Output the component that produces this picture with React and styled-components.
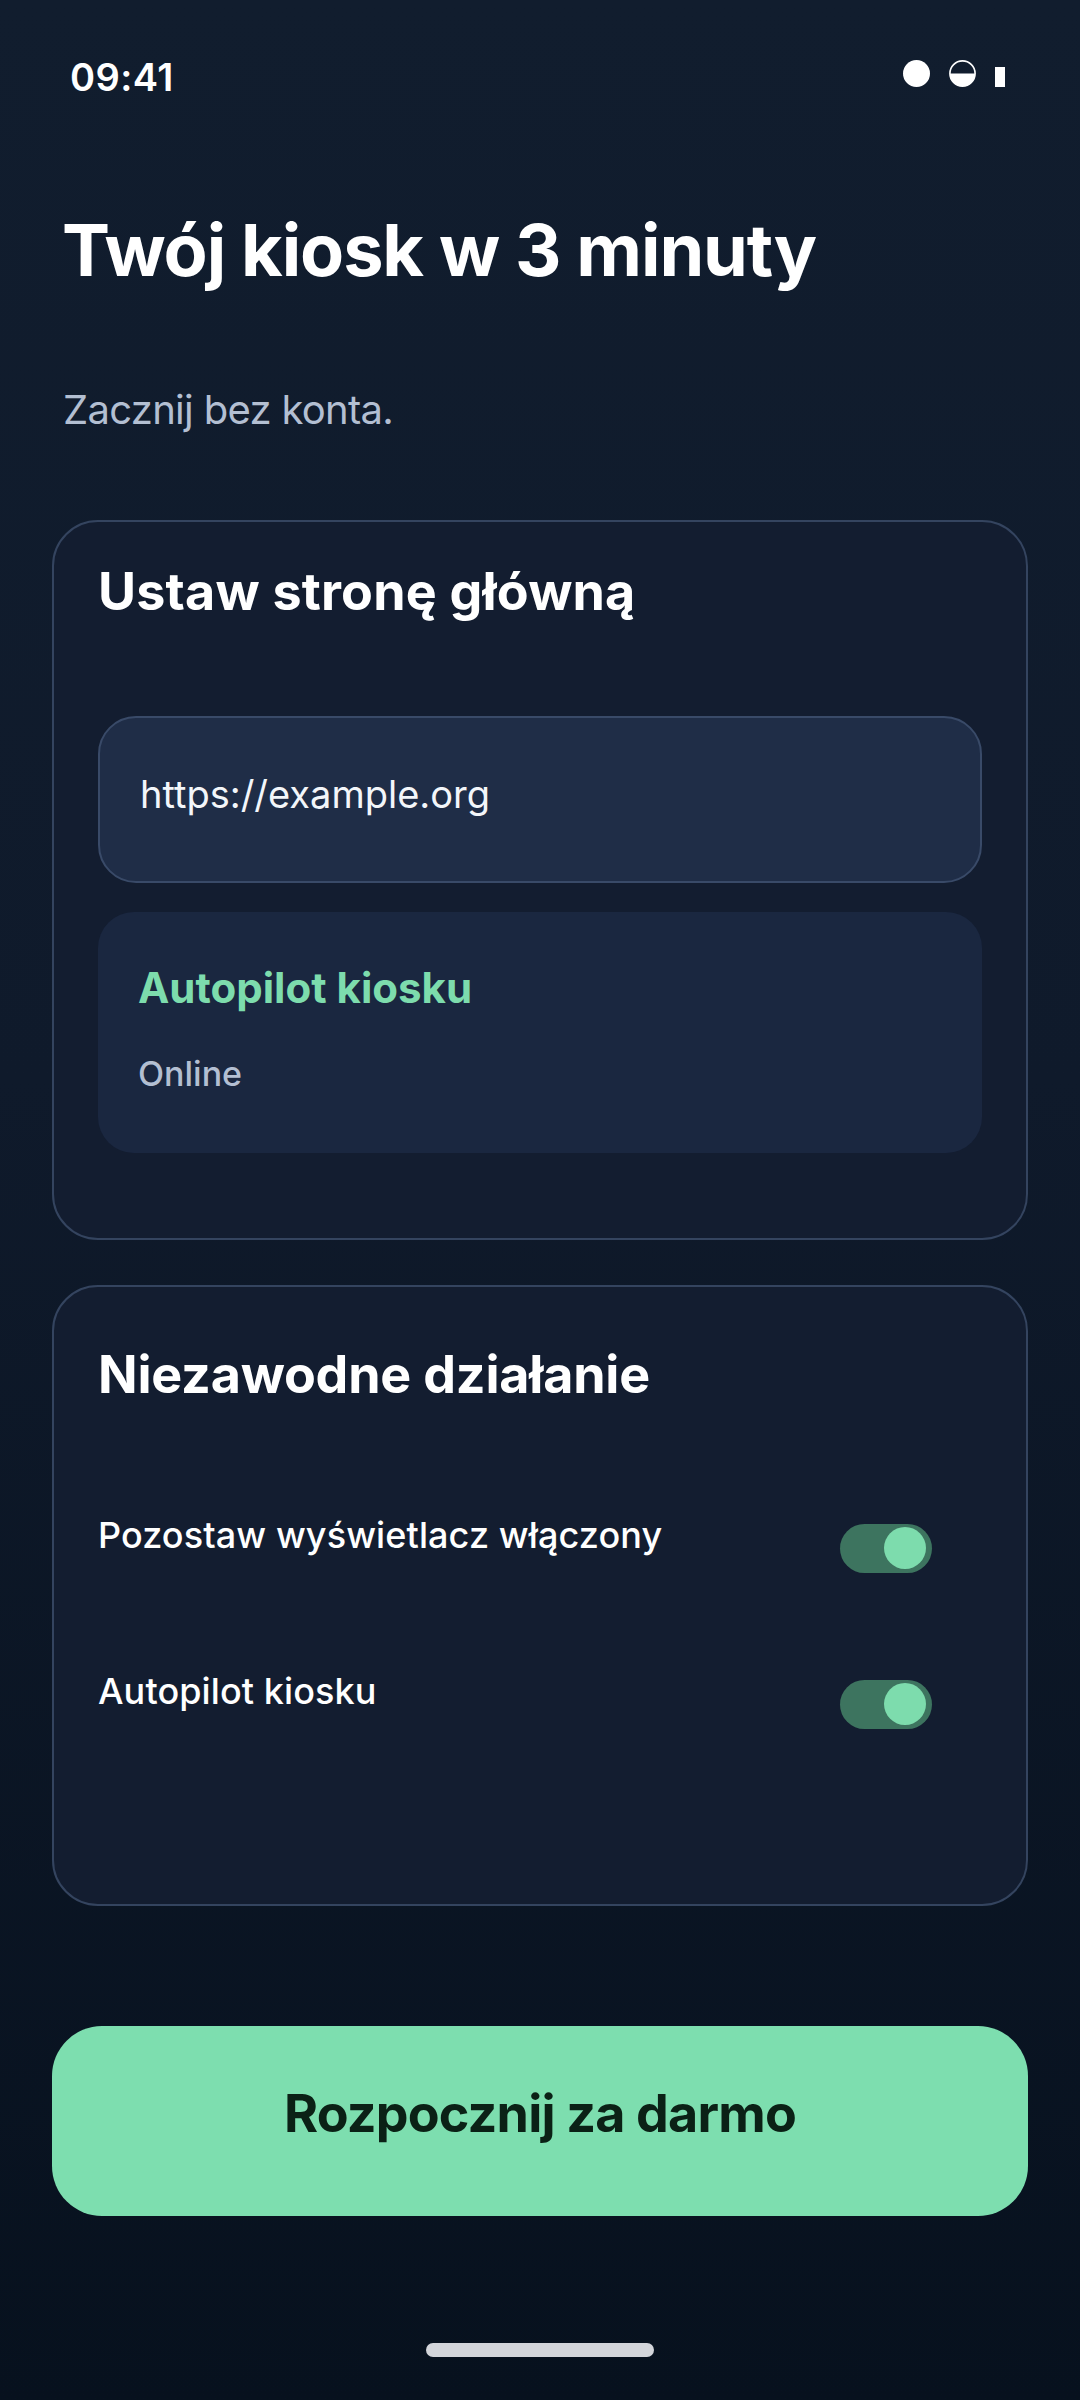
import styled, { createGlobalStyle } from 'styled-components';

const GlobalStyle = createGlobalStyle`
  * { box-sizing: border-box; }
  html, body { margin: 0; padding: 0; }
  body {
    font-family: Inter, "Noto Sans", "Liberation Sans", sans-serif;
    background: #08121f;
  }
`;

const settings = [
  { id: 'screen', label: 'Pozostaw wyświetlacz włączony', on: true },
  { id: 'autopilot', label: 'Autopilot kiosku', on: true },
];

const App = () => {
  return (
    <>
      <GlobalStyle />
      <Page>
        <StatusBar>
          <Time>09:41</Time>
          <StatusIcons>
            <svg width='27' height='27' viewBox='0 0 27 27'>
              <circle cx='13.5' cy='13.5' r='13.5' fill='#fff' />
            </svg>
            <svg width='27' height='27' viewBox='0 0 27 27'>
              <circle cx='13.5' cy='13.5' r='12.6' fill='none' stroke='#fff' strokeWidth='1.6' />
              <path d='M0.9 13.5 H26.1 A12.6 12.6 0 0 1 0.9 13.5 Z' fill='#fff' />
            </svg>
            <Battery />
          </StatusIcons>
        </StatusBar>

        <Content>
          <Title>Twój kiosk w 3 minuty</Title>
          <Subtitle>Zacznij bez konta.</Subtitle>

          <Card>
            <CardTitle>Ustaw stronę główną</CardTitle>
            <UrlField>https://example.org</UrlField>
            <StatusPanel>
              <StatusName>Autopilot kiosku</StatusName>
              <StatusText>Online</StatusText>
            </StatusPanel>
          </Card>

          <Card $tall>
            <CardTitle $spaced>Niezawodne działanie</CardTitle>
            <SettingsList>
              {settings.map(item => (
                <SettingRow key={item.id}>
                  <SettingLabel>{item.label}</SettingLabel>
                  <Toggle $on={item.on}>
                    <Knob />
                  </Toggle>
                </SettingRow>
              ))}
            </SettingsList>
          </Card>

          <PrimaryButton type='button'>Rozpocznij za darmo</PrimaryButton>
        </Content>

        <HomeIndicator />
      </Page>
    </>
  );
};

const Page = styled.div`
  min-height: 2400px;
  width: 1080px;
  display: flex;
  flex-direction: column;
  background: linear-gradient(180deg, #111d2e 0%, #0f1a2b 45%, #07111e 100%);
  color: #fff;
`;

const StatusBar = styled.div`
  display: flex;
  justify-content: space-between;
  align-items: flex-start;
  padding: 55px 75px 0 70px;
`;

const Time = styled.span`
  font-size: 38px;
  font-weight: 600;
  line-height: 1.2;
  letter-spacing: 0.4px;
`;

const StatusIcons = styled.div`
  display: flex;
  align-items: flex-end;
  gap: 19px;
  margin-top: 5px;
  height: 27px;

  svg { display: block; }
`;

const Battery = styled.span`
  display: block;
  width: 10px;
  height: 20px;
  background: #fff;
`;

const Content = styled.main`
  display: flex;
  flex-direction: column;
  padding: 0 52px;
`;

const Title = styled.h1`
  margin: 106px 0 0 10px;
  font-size: 72px;
  font-weight: 700;
  line-height: 1.2;
  letter-spacing: -1.1px;
  color: #fff;
`;

const Subtitle = styled.p`
  margin: 93px 0 0 11px;
  font-size: 40px;
  font-weight: 400;
  line-height: 1.2;
  letter-spacing: -0.7px;
  color: #b3bfd2;
`;

const Card = styled.section`
  margin-top: ${p => (p.$tall ? '45px' : '86px')};
  display: flex;
  flex-direction: column;
  padding: 39px 44px ${p => (p.$tall ? '175px' : '85px')};
  border: 2px solid #34445f;
  border-radius: 46px;
  background: #131d30;
`;

const CardTitle = styled.h2`
  margin: ${p => (p.$spaced ? '18px' : '0')} 0 0;
  font-size: 52px;
  font-weight: 700;
  line-height: 1.2;
  letter-spacing: ${p => (p.$spaced ? '-0.2px' : '0.2px')};
  color: #fff;
`;

const UrlField = styled.div`
  margin-top: 93px;
  height: 167px;
  display: flex;
  align-items: center;
  padding: 0 40px 10px;
  border: 2px solid #394a68;
  border-radius: 38px;
  background: #1f2d47;
  font-size: 38px;
  line-height: 1.2;
  color: #f3f6fa;
`;

const StatusPanel = styled.div`
  margin-top: 29px;
  display: flex;
  flex-direction: column;
  gap: 40px;
  padding: 51px 40px 58px;
  border-radius: 36px;
  background: #1a2740;
`;

const StatusName = styled.span`
  font-size: 42px;
  font-weight: 700;
  line-height: 1.2;
  color: #7ddcad;
`;

const StatusText = styled.span`
  font-size: 34px;
  font-weight: 500;
  line-height: 1.2;
  color: #b3bfd2;
`;

const SettingsList = styled.div`
  margin-top: 108px;
  display: flex;
  flex-direction: column;
  gap: 97px;
`;

const SettingRow = styled.div`
  display: flex;
  justify-content: space-between;
  align-items: flex-start;
  padding-right: 50px;
`;

const SettingLabel = styled.span`
  font-size: 36px;
  font-weight: 500;
  line-height: 1.2;
  letter-spacing: 0.1px;
  color: #fff;
`;

const Toggle = styled.span`
  margin-top: 10px;
  width: 92px;
  height: 49px;
  display: flex;
  align-items: center;
  justify-content: ${p => (p.$on ? 'flex-end' : 'flex-start')};
  padding: 0 6px;
  border-radius: 25px;
  background: ${p => (p.$on ? '#3d745f' : '#334155')};
`;

const Knob = styled.span`
  width: 42px;
  height: 42px;
  border-radius: 50%;
  background: #7ddcad;
`;

const PrimaryButton = styled.button`
  margin-top: 120px;
  height: 190px;
  border: none;
  border-radius: 50px;
  padding: 0 0 14px;
  background: #7ddeaf;
  font-family: inherit;
  font-size: 52px;
  font-weight: 700;
  line-height: 1.2;
  letter-spacing: -0.8px;
  color: #0b2116;
  cursor: pointer;
`;

const HomeIndicator = styled.div`
  align-self: center;
  margin-top: 127px;
  width: 228px;
  height: 14px;
  border-radius: 7px;
  background: #d3d5da;
`;

export default App;
